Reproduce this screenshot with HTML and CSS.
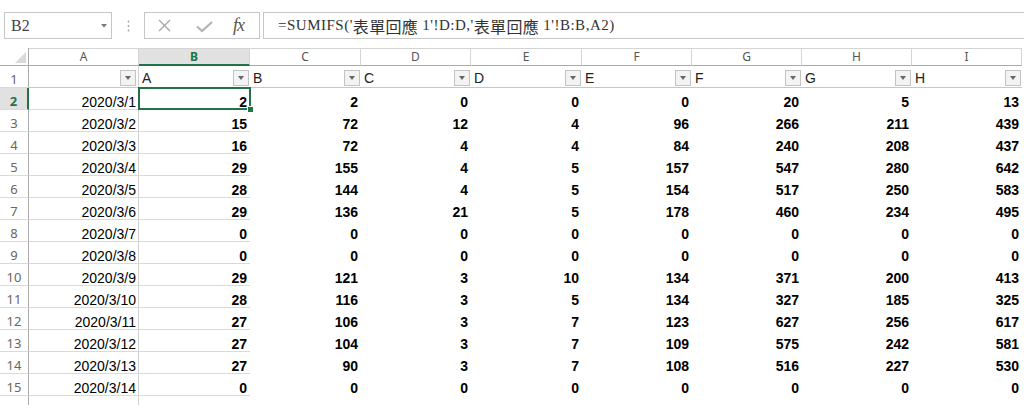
FILE: index.html
```html
<!DOCTYPE html>
<html>
<head>
    <title>SUMIFS sheet</title>
    <link rel="stylesheet" href="styles.css">
</head>
<body>
    <div class="formula-bar">
        <div class="name-box">
            <span>B2</span>
            <svg class="caret" width="6" height="4" viewBox="0 0 6 4"><path d="M0 0 H6 L3 3.5 Z" fill="#777"/></svg>
        </div>
        <div class="grip">
            <svg width="3" height="12" viewBox="0 0 3 12"><circle cx="1.5" cy="1.5" r="0.9" fill="#a0a0a0"/><circle cx="1.5" cy="6" r="0.9" fill="#a0a0a0"/><circle cx="1.5" cy="10.5" r="0.9" fill="#a0a0a0"/></svg>
        </div>
        <div class="fx-box">
            <svg class="icon-x" width="13" height="13" viewBox="0 0 13 13"><path d="M1 1 L12 12 M12 1 L1 12" stroke="#a8a8a8" stroke-width="1.4" fill="none"/></svg>
            <svg class="icon-ok" width="17" height="12" viewBox="0 0 17 12"><path d="M1 5.5 L6 10 L16 1" stroke="#b3b3b3" stroke-width="2.2" fill="none"/></svg>
            <span class="fx">fx</span>
        </div>
        <div class="formula">=SUMIFS('<span class="cjk">表單回應</span> 1'!D:D,'<span class="cjk">表單回應</span> 1'!B:B,A2)</div>
    </div>

    <div class="sheet" id="sheet"></div>

    <script>
        const cols = ["A", "B", "C", "D", "E", "F", "G", "H", "I"];
        const rows = [
            ["2020/3/1", 2, 2, 0, 0, 0, 20, 5, 13],
            ["2020/3/2", 15, 72, 12, 4, 96, 266, 211, 439],
            ["2020/3/3", 16, 72, 4, 4, 84, 240, 208, 437],
            ["2020/3/4", 29, 155, 4, 5, 157, 547, 280, 642],
            ["2020/3/5", 28, 144, 4, 5, 154, 517, 250, 583],
            ["2020/3/6", 29, 136, 21, 5, 178, 460, 234, 495],
            ["2020/3/7", 0, 0, 0, 0, 0, 0, 0, 0],
            ["2020/3/8", 0, 0, 0, 0, 0, 0, 0, 0],
            ["2020/3/9", 29, 121, 3, 10, 134, 371, 200, 413],
            ["2020/3/10", 28, 116, 3, 5, 134, 327, 185, 325],
            ["2020/3/11", 27, 106, 3, 7, 123, 627, 256, 617],
            ["2020/3/12", 27, 104, 3, 7, 109, 575, 242, 581],
            ["2020/3/13", 27, 90, 3, 7, 108, 516, 227, 530],
            ["2020/3/14", 0, 0, 0, 0, 0, 0, 0, 0]
        ];

        let html = '<div class="corner"></div>';
        cols.forEach(function(c) {
            html += '<div class="colhead' + (c === "B" ? " sel" : "") + '">' + c + '</div>';
        });

        // row 1: filter headers
        html += '<div class="rowhead">1</div>';
        cols.forEach(function(c, i) {
            const label = i === 0 ? "" : cols[i - 1];
            html += '<div class="cell filter-cell' + (i === 0 ? " col-a" : "") + '"><span>' + label + '</span><span class="filter"></span></div>';
        });

        rows.forEach(function(r, n) {
            const rowNo = n + 2;
            html += '<div class="rowhead' + (rowNo === 2 ? " sel" : "") + '">' + rowNo + '</div>';
            r.forEach(function(v, i) {
                let cls = "cell";
                if (i === 0) cls += " col-a lined";
                else cls += " num";
                if (i === 1) cls += " lined";
                if (i === 1 && rowNo === 2) cls += " active";
                html += '<div class="' + cls + '">' + v + '</div>';
            });
        });

        // row 16 is cut off by the window, only its lines show
        html += '<div class="rowhead"></div><div class="cell col-a lined"></div><div class="cell lined"></div>';

        document.getElementById("sheet").innerHTML = html;
    </script>
</body>
</html>
```

FILE: styles.css
```css
body {
    margin: 0;
    background-color: #fff;
    font-family: "Liberation Sans", Arial, sans-serif;
    overflow: hidden;
}

/* formula bar */
.formula-bar {
    display: flex;
    height: 27px;
    margin-top: 12px;
    padding-left: 4px;
}

.name-box {
    width: 108px;
    box-sizing: border-box;
    border: 1px solid #c6c6c6;
    display: flex;
    align-items: center;
    justify-content: space-between;
    padding: 0 4px 0 6px;
    font-family: "Liberation Serif", serif;
    font-size: 16px;
    color: #444;
}

.name-box .caret {
    margin-top: 1px;
}

.grip {
    width: 32px;
    display: flex;
    align-items: center;
    justify-content: center;
}

.fx-box {
    width: 116px;
    box-sizing: border-box;
    border: 1px solid #c6c6c6;
    display: flex;
    align-items: center;
}

.icon-x {
    margin-left: 13px;
}

.icon-ok {
    margin-left: 25px;
    margin-top: 3px;
}

.fx {
    margin-left: 20px;
    font-family: "Liberation Serif", serif;
    font-style: italic;
    font-size: 18px;
    letter-spacing: -1px;
    color: #555;
}

.formula {
    flex: 1;
    margin-left: 3px;
    border: 1px solid #c6c6c6;
    border-right: none;
    padding-left: 14px;
    display: flex;
    align-items: center;
    white-space: pre;
    font-family: "Liberation Serif", "Noto Sans CJK TC", serif;
    font-size: 15px;
    letter-spacing: 0.5px;
    color: #333;
}

.formula .cjk {
    font-family: "Noto Sans CJK TC", sans-serif;
    font-size: 16px;
    letter-spacing: 0.3px;
}

/* grid */
.sheet {
    margin-top: 9px;
    display: grid;
    grid-template-columns: 29px 110px 111px 111px 110px 111px 110px 110px 110px 110px;
    grid-template-rows: 18px;
    grid-auto-rows: 22px;
}

.sheet > div {
    box-sizing: border-box;
}

.corner {
    position: relative;
    border-right: 1px solid #ababab;
    border-bottom: 1px solid #ababab;
}

.corner::after {
    content: "";
    position: absolute;
    right: 2px;
    bottom: 2px;
    border-left: 11px solid transparent;
    border-bottom: 11px solid #dadada;
}

.colhead {
    border-top: 1px solid #d4d4d4;
    border-right: 1px solid #d4d4d4;
    border-bottom: 1px solid #ababab;
    text-align: center;
    font-family: "Noto Sans", sans-serif;
    font-size: 12px;
    line-height: 16px;
    color: #555;
}

.colhead.sel {
    background-color: #e1e1e1;
    color: #217346;
    font-weight: bold;
    border-bottom: 2px solid #217346;
}

.rowhead {
    border-right: 1px solid #ababab;
    border-bottom: 1px solid #dadada;
    display: flex;
    align-items: flex-end;
    justify-content: center;
    padding-bottom: 1px;
    font-family: "Noto Sans", sans-serif;
    font-size: 13px;
    line-height: 14px;
    color: #666;
}

.rowhead.sel {
    background-color: #e1e1e1;
    color: #217346;
    font-weight: bold;
    border-right: 2px solid #217346;
}

.cell {
    display: flex;
    align-items: flex-end;
    justify-content: flex-end;
    padding-right: 3px;
    font-size: 14px;
    line-height: 14px;
    color: #000;
    border-bottom: 1px solid transparent;
}

.cell.lined {
    border-bottom-color: #dadada;
}

.cell.col-a {
    border-right: 1px solid #d0d0d0;
    padding-right: 2px;
}

.cell.num {
    font-weight: bold;
}

.filter-cell {
    justify-content: space-between;
    padding-left: 3px;
    padding-right: 1px;
    border-bottom: 1px solid #c6c6c6;
    color: #222;
    line-height: 16px;
}

.filter-cell span:first-child {
    padding-bottom: 1px;
}

.filter {
    width: 16px;
    height: 16px;
    box-sizing: border-box;
    margin-bottom: 1px;
    border: 1px solid #c3c3c3;
    background-color: #f3f3f3;
    display: flex;
    align-items: center;
    justify-content: center;
}

.filter::after {
    content: "";
    border-left: 3.5px solid transparent;
    border-right: 3.5px solid transparent;
    border-top: 4px solid #666;
}

.cell.active {
    position: relative;
}

.cell.active::after {
    content: "";
    position: absolute;
    left: -1px;
    top: -1px;
    right: -1px;
    bottom: -1px;
    border: 2px solid #217346;
}

.cell.active::before {
    content: "";
    position: absolute;
    right: -4px;
    bottom: -4px;
    width: 5px;
    height: 5px;
    background-color: #217346;
    border: 1px solid #fff;
    z-index: 1;
}
```
